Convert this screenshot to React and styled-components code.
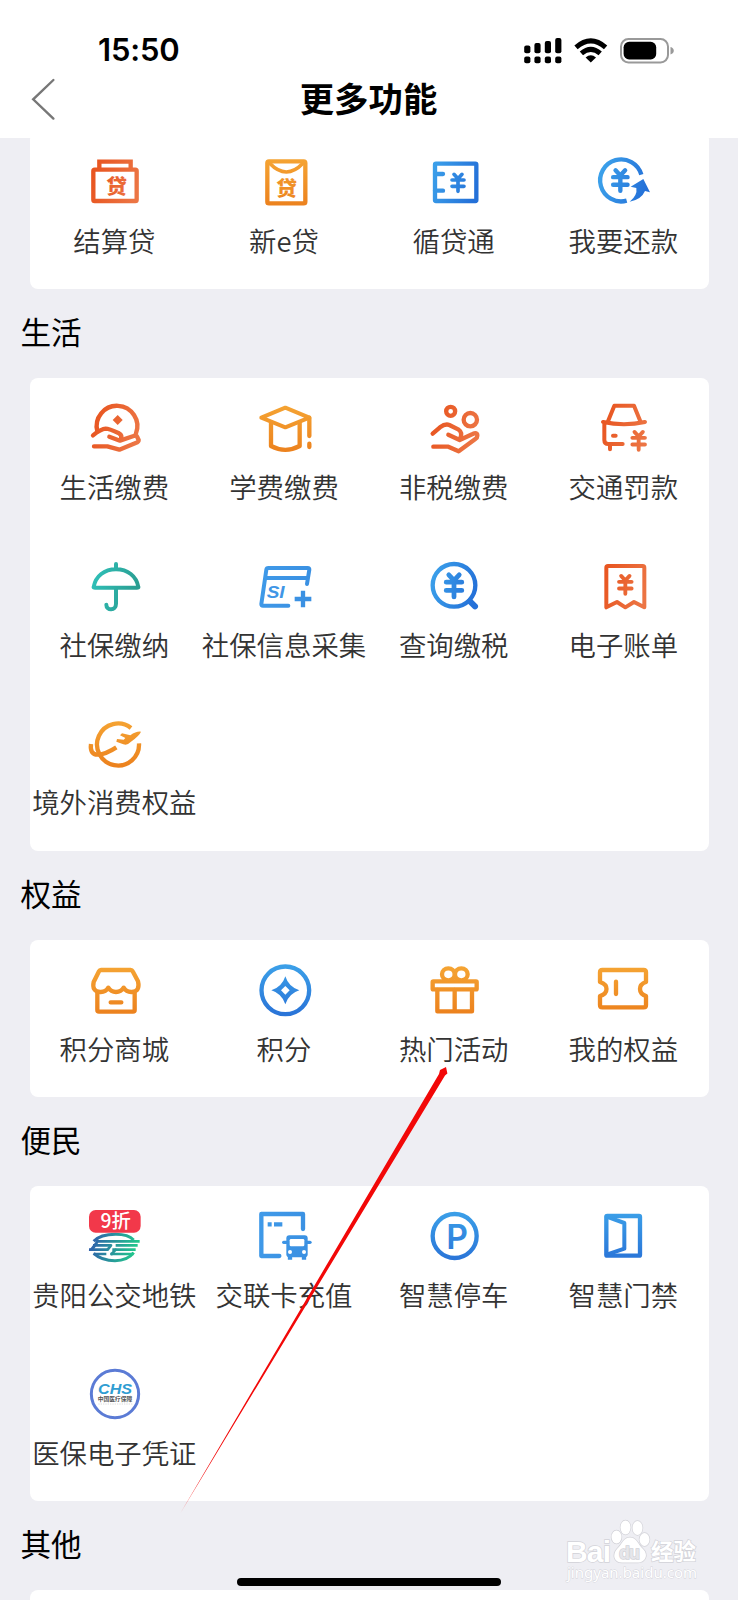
import React from 'react'
import styled, { createGlobalStyle } from 'styled-components'

const GlobalStyle = createGlobalStyle`
  body {
    margin: 0;
    background: #eeeef3;
    font-family: "Noto Sans CJK SC", "Noto Sans", sans-serif;
  }
`

const Screen = styled.div`
  position: relative;
  display: flex;
  flex-direction: column;
  width: 738px;
  height: 1600px;
  overflow: hidden;
  background: #eeeef3;
`

const Header = styled.header`
  flex: none;
  height: 138px;
  background: #fff;
`

const StatusBar = styled.div`
  display: flex;
  align-items: center;
  justify-content: space-between;
  box-sizing: border-box;
  height: 68px;
  padding: 31px 64px 0 98px;
`

const Time = styled.span`
  font-family: Inter, sans-serif;
  font-size: 31px;
  font-weight: 600;
  line-height: 38px;
  letter-spacing: -0.2px;
  color: #000;
`

const NavBar = styled.div`
  display: grid;
  grid-template-columns: 1fr auto 1fr;
  align-items: center;
  height: 61px;
  padding: 0 31px 0 30px;
`

const NavTitle = styled.h1`
  margin: 0;
  padding-bottom: 3px;
  font-size: 34.4px;
  font-weight: 600;
  line-height: 50px;
  color: #000;
`

const Content = styled.main`
  flex: 1;
  min-height: 0;
  overflow: hidden;
`

/* the list is scrolled a little way under the header */
const Scrolled = styled.div`
  margin-top: -6.3px;
`

const Card = styled.section`
  display: grid;
  grid-template-columns: repeat(4, 1fr);
  grid-auto-rows: 157.65px;
  min-height: 60px;
  margin: 0 29.3px 0 30px;
  border-radius: 8px;
  background: #fff;
`

const SectionTitle = styled.h2`
  margin: 0;
  padding-left: 20.5px;
  height: 88.7px;
  font-size: 30.6px;
  font-weight: 400;
  line-height: 85px;
  color: #000;
`

const Item = styled.div`
  display: flex;
  flex-direction: column;
  align-items: center;
  padding-top: 18px;
`

const Icon = styled.svg`
  flex: none;
  width: 60px;
  height: 60px;
  fill: none;
  stroke: ${p => `url(#${p.$tone})`};
  stroke-width: 13;
  stroke-linecap: round;
  stroke-linejoin: round;
`

const Label = styled.span`
  margin: 10px 1px 0 0;
  font-size: 27.4px;
  font-weight: 350;
  line-height: 40px;
  white-space: nowrap;
  color: #333;
`

const Glyph = styled.text`
  stroke: none;
  text-anchor: middle;
  font-family: ${p => p.$font || '"Noto Sans CJK SC", sans-serif'};
  font-size: ${p => p.$size}px;
  font-weight: ${p => p.$weight || 700};
  font-style: ${p => p.$italic ? "italic" : "normal"};
`

const Arrow = styled.svg`
  position: absolute;
  left: 170px;
  top: 1060px;
  width: 290px;
  height: 460px;
`

const HomeIndicator = styled.div`
  position: absolute;
  left: 237px;
  top: 1577.5px;
  width: 264px;
  height: 8.5px;
  border-radius: 5px;
  background: #000;
`

const Watermark = styled.svg`
  position: absolute;
  left: 560px;
  top: 1516px;
  width: 145px;
  height: 70px;
`

const tones = [
  { id: "red", from: "#e8541f", to: "#ec7544" },
  { id: "orange", from: "#f5a433", to: "#ec821e", vertical: true },
  { id: "blue", from: "#3ba0ea", to: "#2470d8" },
  { id: "azure", from: "#3b9fe8", to: "#2a75d8", vertical: true },
  { id: "sky", from: "#3f99e8", to: "#3a90e2" },
  { id: "teal", from: "#2fc0b8", to: "#2a9c90" },
  { id: "metro", from: "#3158ae", to: "#22c78c" },
]

function Gradients() {
  return (
    <svg width="0" height="0" style={{position: "absolute"}}>
      <defs>
        {tones.map(t => (
          <linearGradient key={t.id} id={t.id} gradientUnits="userSpaceOnUse" x1={t.vertical ? 90 : 20} y1={t.vertical ? 25 : 70} x2={t.vertical ? 90 : 160} y2={t.vertical ? 165 : 110}>
            <stop offset="0" stopColor={t.from}/>
            <stop offset="1" stopColor={t.to}/>
          </linearGradient>
        ))}
      </defs>
    </svg>
  )
}

function Yen({ x, y, s = 1 }) {
  const pt = (dx, dy) => `${x + dx * s} ${y + dy * s}`
  const d = `M${pt(-12, -25)} L${pt(0, -12)} L${pt(12, -25)} M${pt(0, -12)} V${y + 26 * s}
    M${pt(-18, -8)} H${x + 18 * s} M${pt(-18, 11)} H${x + 18 * s}`
  return <path strokeWidth={11 * s} d={d}/>
}

const icons = {
  settle: ["red", <>
    <rect x="25" y="59" width="130" height="94" rx="4"/>
    <path strokeLinecap="butt" strokeLinejoin="miter" d="M43 59 V35 H137 V59"/>
    <Glyph fill="url(#red)" x="95" y="131" $size="62" $weight="900">贷</Glyph>
  </>],
  eloan: ["orange", <>
    <rect x="37" y="34" width="114" height="126" rx="5"/>
    <path strokeWidth="11" d="M44 40 Q94 92 144 40"/>
    <Glyph fill="url(#orange)" x="95" y="138" $size="62" $weight="900">贷</Glyph>
  </>],
  cycle: ["blue", <>
    <rect x="33" y="41" width="124" height="112" rx="3"/>
    <path d="M33 72 H57 M33 122 H57"/>
    <Yen x={102} y={98}/>
  </>],
  repay: ["blue", <>
    <path strokeLinecap="butt" d="M98 152 A63 63 0 1 1 142 74"/>
    <path fill="url(#blue)" stroke="none" d="M148 87 L168 127 L153 123 Q142 149 107 155 Q131 136 127 114 L110 110 Z"/>
    <Yen x={79} y={91} s={1.2}/>
  </>],
  life: ["red", <>
    <path d="M37 106 A61 61 0 1 1 153 112"/>
    <path d="M24 118 Q48 99 62 98 Q72 98 102 112 Q112 118 108 126"/>
    <path d="M73 122 L105 134 L146 120 Q155 115 157 124 L161 132 Q161 138 152 141 L103 161 L67 151 H27"/>
    <path fill="url(#red)" stroke="none" d="M98 57 L113 72 L98 87 L83 72 Z"/>
  </>],
  tuition: ["orange", <>
    <path strokeWidth="12" d="M91 35 L19 65 L91 94 L163 65 Z"/>
    <path d="M48 79 V150 Q91 173 134 150 V79 M163 65 V120 M163 143 V153"/>
  </>],
  nontax: ["red", <>
    <circle cx="80" cy="46" r="13.5"/>
    <circle cx="139" cy="71" r="20"/>
    <path d="M26 113 L48 94 Q64 82 76 87 L104 101 Q117 110 108 128"/>
    <path d="M73 116 L107 132 L146 114 Q160 107 160 119 Q160 125 154 129 L104 166 L73 152 H28"/>
  </>],
  traffic: ["red", <>
    <path strokeWidth="12" d="M42 76 L61 29 H120 L139 76 M27 78 Q90 91 153 78 M31 80 V132 Q31 144 43 144 H86 M48 144 V160 M57 119 H65"/>
    <Yen x={134} y={134} s={1.05}/>
  </>],
  umbrella: ["teal", <>
    <path strokeWidth="12" d="M26 99 C32 66 58 46 93 46 S154 66 160 99 Q161 101 156 101 H30 Q25 101 26 99 M93 30 V46 M93 101 V149 C93 171 64 171 64 152"/>
  </>],
  collect: ["sky", <>
    <path strokeWidth="12" d="M156 90 L163 47 Q163 42 158 42 H40 Q35 42 34 47 L19 150 Q19 155 24 155 H100 M32 72 H158"/>
    <path strokeLinecap="butt" d="M144 110 V160 M119 135 H169"/>
    <Glyph fill="#3f96e6" x="62" y="133" $size="50" $italic textLength="54" lengthAdjust="spacingAndGlyphs" $font='"Liberation Sans", sans-serif'>SI</Glyph>
  </>],
  query: ["blue", <>
    <circle cx="90" cy="94" r="64"/>
    <path strokeWidth="18" d="M138 142 L153 157"/>
    <Yen x={90} y={95} s={1.3}/>
  </>],
  bill: ["red", <>
    <path strokeWidth="12" d="M42 36 H146 Q151 36 151 41 V160 L120 144 L94 160 L69 144 L37 160 V41 Q37 36 42 36 Z"/>
    <Yen x={94} y={92} s={1.05}/>
  </>],
  abroad: ["orange", <>
    <path strokeLinecap="butt" d="M138 51 A63 63 0 1 0 162 97"/>
    <path strokeLinecap="butt" d="M18 99 Q14 131 38 131 Q62 130 94 109"/>
    <path fill="url(#orange)" stroke="none" d="M168 62 Q164 73 136 94 Q127 104 115 100 L94 92 L96 84 L116 86 L121 81 L105 73 L111 67 L136 73 Q154 60 168 62 Z"/>
  </>],
  mall: ["orange", <>
    <path d="M48 36 H137 Q141 36 143 40 L159 70 Q166 100 141 102 Q124 103 116 89 Q108 102 93 102 Q78 102 70 89 Q62 103 45 102 Q20 100 26 72 L42 40 Q44 36 48 36 Z"/>
    <path d="M37 104 V156 Q37 161 42 161 H144 Q149 161 149 156 V104 M77 133 H109"/>
  </>],
  points: ["azure", <>
    <circle cx="91" cy="97" r="71.5"/>
    <path stroke="none" fill="url(#azure)" d="M91 55 Q101 87 133 97 Q101 107 91 139 Q81 107 49 97 Q81 87 91 55 Z"/>
    <path stroke="none" fill="#fff" d="M91 84 L104 97 L91 110 L78 97 Z"/>
  </>],
  gift: ["orange", <>
    <ellipse cx="73" cy="49" rx="19" ry="18"/>
    <ellipse cx="112" cy="49" rx="19" ry="18"/>
    <rect x="26" y="70" width="132" height="24" rx="2"/>
    <path d="M40 96 V160 H144 V96 M92 96 V160"/>
  </>],
  ticket: ["orange", <>
    <path strokeLinecap="butt" d="M18 72 V43 Q18 36 25 36 H149 Q156 36 156 43 V72 C132 80 132 106 156 114 V141 Q156 148 149 148 H25 Q18 148 18 141 V114 C44 106 44 80 18 72 Z"/>
    <path d="M66 71 V108"/>
  </>],
  metro: ["metro", <>
    <path strokeWidth="9" strokeLinecap="butt" d="M26 112 Q46 91 92 91 Q130 91 146 108 M26 148 Q50 170 90 170 Q128 170 146 146"/>
    <path strokeWidth="8" strokeLinecap="butt" d="M34 112 H164 M24 124 H78 M92 124 H158 M12 137 H68 M82 137 H152 M26 150 H64 M76 150 H146"/>
    <path strokeWidth="8" d="M78 124 L68 137 M92 137 L80 150"/>
    <path stroke="none" fill="url(#metro)" d="M11 140 L36 108 L40 116 L24 140 Z"/>
    <rect x="12" y="18" width="155" height="68" rx="20" fill="#f2384a" stroke="none"/>
    <Glyph fill="#fff" x="92" y="73" $size="58" $weight="500">9折</Glyph>
  </>],
  topup: ["sky", <>
    <path d="M144 75 V30 H19 V156 H73"/>
    <path strokeLinecap="butt" d="M38 61 H50 M57 61 H82"/>
    <path strokeWidth="10" d="M86 115 H165"/>
    <rect x="94" y="94" width="64" height="66" rx="9" fill="url(#sky)" stroke="none"/>
    <path strokeLinecap="butt" strokeWidth="13" d="M105 154 V167 M147 154 V167"/>
    <rect x="104" y="105" width="44" height="22" rx="4" fill="#fff" stroke="none"/>
    <circle cx="105" cy="144" r="6" fill="#fff" stroke="none"/>
    <circle cx="147" cy="144" r="6" fill="#fff" stroke="none"/>
  </>],
  parking: ["azure", <>
    <circle cx="92" cy="96" r="66"/>
    <Glyph fill="url(#azure)" x="99" y="135" $size="101" $weight="600" $font="Inter, sans-serif">P</Glyph>
  </>],
  door: ["azure", <>
    <rect x="37" y="36" width="101" height="119" rx="3"/>
    <path strokeWidth="12" d="M38 38 L91 57 V134 L38 152"/>
  </>],
  chs: ["sky", <>
    <circle cx="90" cy="96" r="71" stroke="#5b7bd5" strokeWidth="9"/>
    <Glyph fill="#2f9dd2" x="90" y="96" $size="46" $italic textLength="102" lengthAdjust="spacingAndGlyphs" $font='"Liberation Sans", sans-serif'>CHS</Glyph>
    <Glyph fill="#555" x="90" y="118" $size="17.3">中国医疗保障</Glyph>
    <path stroke="#ccc" strokeWidth="2" strokeDasharray="4 3" strokeLinecap="butt" d="M40 126 H142"/>
  </>],
}

const groups = [
  {
    items: [["settle", "结算贷"], ["eloan", "新e贷"], ["cycle", "循贷通"], ["repay", "我要还款"]],
  },
  {
    title: "生活",
    items: [
      ["life", "生活缴费"], ["tuition", "学费缴费"], ["nontax", "非税缴费"], ["traffic", "交通罚款"],
      ["umbrella", "社保缴纳"], ["collect", "社保信息采集"], ["query", "查询缴税"], ["bill", "电子账单"],
      ["abroad", "境外消费权益"],
    ],
  },
  {
    title: "权益",
    items: [["mall", "积分商城"], ["points", "积分"], ["gift", "热门活动"], ["ticket", "我的权益"]],
  },
  {
    title: "便民",
    items: [
      ["metro", "贵阳公交地铁"], ["topup", "交联卡充值"], ["parking", "智慧停车"], ["door", "智慧门禁"],
      ["chs", "医保电子凭证"],
    ],
  },
  { title: "其他", items: [] },
]

const bars = [[524.2, 44.5], [534.4, 42], [544.8, 40], [555.2, 37]]

function StatusIcons() {
  return (
    <svg width="152" height="30" viewBox="522 34 152 30">
      {bars.map(([x, y]) => (
        <React.Fragment key={x}>
          <rect x={x} y={y} width="6.2" height={52.2 - y} rx="2"/>
          <rect x={x} y="55.6" width="6.2" height="6.6" rx="2"/>
        </React.Fragment>
      ))}
      <path fill="none" stroke="#000" strokeWidth="5" d="M576 46.3 Q590.8 33.4 605.6 46.3 M581.4 52.4 Q590.8 44.4 600.2 52.4"/>
      <path d="M585.6 56.4 Q590.8 52.2 596 56.4 L590.8 61.5 Z"/>
      <rect x="621" y="38" width="47" height="23.4" rx="7.5" fill="none" stroke="#999" strokeWidth="2"/>
      <rect x="623.6" y="40.8" width="32.6" height="17.6" rx="5.5"/>
      <path fill="#999" d="M670.5 46 Q673.8 47 673.8 49.7 T670.5 53.4 Z"/>
    </svg>
  )
}

function Feature({ name, label }) {
  const [tone, drawing] = icons[name]
  return (
    <Item>
      <Icon viewBox="0 0 180 180" $tone={tone}>{drawing}</Icon>
      <Label>{label}</Label>
    </Item>
  )
}

function App() {
  return (
    <Screen>
      <GlobalStyle/>
      <Gradients/>
      <Header>
        <StatusBar>
          <Time>15:50</Time>
          <StatusIcons/>
        </StatusBar>
        <NavBar>
          <svg width="26" height="44" viewBox="0 0 26 44" fill="none" stroke="#777" strokeWidth="2.4" strokeLinecap="round">
            <path d="M23.4 3 L3.2 22.3 L23.4 41.6"/>
          </svg>
          <NavTitle>更多功能</NavTitle>
        </NavBar>
      </Header>
      <Content>
        <Scrolled>
          {groups.map((group, idx) => (
            <React.Fragment key={idx}>
              {group.title && <SectionTitle>{group.title}</SectionTitle>}
              <Card>
                {group.items.map(([name, label]) => <Feature key={name} name={name} label={label}/>)}
              </Card>
            </React.Fragment>
          ))}
        </Scrolled>
      </Content>
      <Arrow viewBox="170 1060 290 460">
        <path fill="#f20808" d="M180.5 1513 L439 1074 L440 1070 L446 1067 L447.4 1073.5 L445 1075.5 Z"/>
      </Arrow>
      <Watermark viewBox="560 1516 145 70">
        <g fill="#fff" stroke="#d2d2d8" strokeWidth="1.4" paintOrder="stroke">
          <text x="566" y="1561.5" fontFamily="Liberation Sans, sans-serif" fontWeight="700" fontSize="30" textLength="45">Bai</text>
          <ellipse cx="616.5" cy="1537" rx="5" ry="6.5"/>
          <ellipse cx="625.5" cy="1527.5" rx="5" ry="7"/>
          <ellipse cx="637.5" cy="1528" rx="5" ry="7"/>
          <ellipse cx="644.5" cy="1539.5" rx="5" ry="6.5"/>
          <path d="M630 1537.5 C637 1537.5 638 1545 643 1549 C649 1555 645 1562.5 638 1562.5 H622 C614 1562.5 612 1555 617 1549 C622 1545 623 1537.5 630 1537.5 Z"/>
          <text x="619" y="1559" fontFamily="Liberation Sans, sans-serif" fontWeight="700" fontSize="18" textLength="21" fill="#e6e6ea">du</text>
          <text x="651" y="1560" fontFamily="Noto Sans CJK SC, sans-serif" fontWeight="700" fontSize="22.5" textLength="45">经验</text>
          <text x="567" y="1578" fontFamily="Noto Sans, sans-serif" fontSize="15" textLength="130" strokeWidth="0.8">jingyan.baidu.com</text>
        </g>
      </Watermark>
      <HomeIndicator/>
    </Screen>
  )
}

export default App
